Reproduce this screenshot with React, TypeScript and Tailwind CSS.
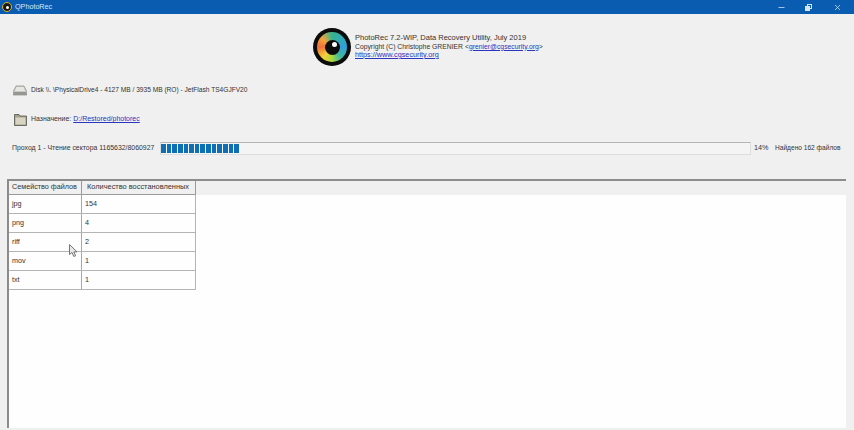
import { Minus, X } from 'lucide-react';

const rows = [
    ['jpg', '154'],
    ['png', '4'],
    ['riff', '2'],
    ['mov', '1'],
    ['txt', '1'],
];

function AppIcon() {
    return (
        <div className="flex items-center justify-center w-[10px] h-[10px] rounded-full bg-[#1a1a10] border border-[#e0b030]">
            <div className="w-[3px] h-[3px] rounded-full bg-white" />
        </div>
    );
}

function Logo() {
    return (
        <div className="relative flex items-center justify-center w-[38px] h-[38px] rounded-full bg-[#0c0c0c]">
            <div className="flex items-center justify-center w-[30px] h-[30px] rounded-full bg-[conic-gradient(#35b58c,#2f9fdc_90deg,#3fb8a0_140deg,#a8d83e_180deg,#f3d23a_220deg,#f0703a_270deg,#f4a43a_310deg,#35b58c)]">
                <div className="relative w-[15px] h-[15px] rounded-full bg-[#0c0c0c]">
                    <div className="absolute left-[7px] top-[2px] w-[5px] h-[5px] rounded-full bg-white" />
                </div>
            </div>
        </div>
    );
}

function DiskIcon() {
    return (
        <svg width="14" height="11" viewBox="0 0 14 11">
            <path d="M3 1h8l3 6v3H0V7z" fill="#c9c9c6" stroke="#8a8a84" strokeWidth="0.7" />
            <path d="M0.5 7h13v3h-13z" fill="#96968f" />
            <path d="M3.5 2h7l1.5 4H2z" fill="#e6e6e3" />
        </svg>
    );
}

function FolderIcon() {
    return (
        <svg width="13" height="13" viewBox="0 0 13 13">
            <path d="M0.5 1.5h4.5l1 1.5h6.5v9.5h-12z" fill="#a3a18c" stroke="#55544a" strokeWidth="0.8" />
            <path d="M1.5 4.5h10v7h-10z" fill="#d8d6c3" />
        </svg>
    );
}

function Cursor() {
    return (
        <svg className="absolute left-[60px] top-[63px]" width="9" height="13" viewBox="0 0 9 13">
            <path d="M0.5 0.5v10l2.5-2 1.8 4 1.8-.8-1.8-3.8h3.2z" fill="#e8e8e8" stroke="#55555a" strokeWidth="0.8" />
        </svg>
    );
}

export default function App() {
    return (
        <div className="w-[854px] h-[430px] overflow-hidden flex flex-col bg-[#f0f0f0] text-[#333333] text-[7.2px] leading-[8.5px] whitespace-nowrap font-['Liberation_Sans',sans-serif]">
            <div className="h-[14px] shrink-0 flex items-center bg-[#0a5cb0] text-[#d5e6f7]">
                <div className="ml-[2px] mr-[3px]">
                    <AppIcon />
                </div>
                <span className="text-[7.2px]">QPhotoRec</span>
                <div className="ml-auto flex items-center">
                    <Minus className="w-[9px] h-[9px] mr-[19px]" strokeWidth={2} />
                    <div className="relative w-[7px] h-[7px] mr-[21px]">
                        <div className="absolute right-0 top-0 w-[5px] h-[5px] border border-[#d5e6f7]" />
                        <div className="absolute left-0 bottom-0 w-[5px] h-[5px] border border-[#d5e6f7] bg-[#d5e6f7]" />
                    </div>
                    <X className="w-[9px] h-[9px] mr-[12px]" strokeWidth={2} />
                </div>
            </div>

            <div className="h-[52px] mt-[14px] shrink-0 flex items-start pl-[313px]">
                <Logo />
                <div className="ml-[4px] mt-[6px]">
                    <div className="text-[7.5px]">PhotoRec 7.2-WIP, Data Recovery Utility, July 2019</div>
                    <div className="text-[6.8px]">
                        Copyright (C) Christophe GRENIER &lt;<span className="text-[#2a35c0] underline">grenier@cgsecurity.org</span>&gt;
                    </div>
                    <div className="text-[7.25px] text-[#2a35c0] underline">https://www.cgsecurity.org</div>
                </div>
            </div>

            <div className="h-[12px] mt-[4px] shrink-0 flex items-center pl-[13px]">
                <DiskIcon />
                <span className="ml-[4px] text-[6.6px] pt-[1px]">Disk \\. \PhysicalDrive4 - 4127 MB / 3935 MB (RO) - JetFlash TS4GJFV20</span>
            </div>

            <div className="h-[13px] mt-[17px] shrink-0 flex items-center pl-[14px]">
                <FolderIcon />
                <span className="ml-[4px] text-[6.9px]">Назначение:</span>
                <span className="ml-[2px] text-[7px] text-[#2a35c0] underline">D:/Restored/photorec</span>
            </div>

            <div className="h-[14px] mt-[15px] shrink-0 flex items-center pl-[12px]">
                <span className="w-[148px] text-[6.9px]">Проход 1 - Чтение сектора 1165632/8060927</span>
                <div className="w-[591px] h-[13px] flex items-center bg-[#f4f4f4] border border-[#dddddd] border-t-[#b5b5b5]">
                    <div className="flex h-[9px] w-[78px] justify-between overflow-hidden">
                        {Array.from({ length: 14 }).map((_, i) => (
                            <div key={i} className="w-[4.6px] shrink-0 bg-[#0f6fb5]" />
                        ))}
                    </div>
                </div>
                <span className="ml-[3px] w-[21px]">14%</span>
                <span className="text-[6.6px]">Найдено 162 файлов</span>
            </div>

            <div className="relative flex-1 mt-[24px] ml-[7px] mr-[8px] mb-[2px] flex flex-col border-t-2 border-l-2 border-[#8c8c8c]">
                <div className="flex h-[14px] shrink-0 bg-[#f0f0f0]">
                    <div className="w-[73px] flex items-center pl-[3px] border-r border-b border-[#9a9a9a]">Семейство файлов</div>
                    <div className="w-[114px] flex items-center pl-[5px] text-[7.4px] border-r border-b border-[#9a9a9a]">Количество восстановленных</div>
                </div>
                <div className="flex-1 bg-[#fefefe]">
                    {rows.map(([name, count]) => (
                        <div key={name} className="flex h-[19px] w-[187px] border-b border-[#b4b4b4] border-r">
                            <div className="w-[73px] flex items-center pl-[3px] border-r border-[#a8a8a8]">{name}</div>
                            <div className="flex-1 flex items-center pl-[3px]">{count}</div>
                        </div>
                    ))}
                </div>
                <Cursor />
            </div>
        </div>
    );
}
